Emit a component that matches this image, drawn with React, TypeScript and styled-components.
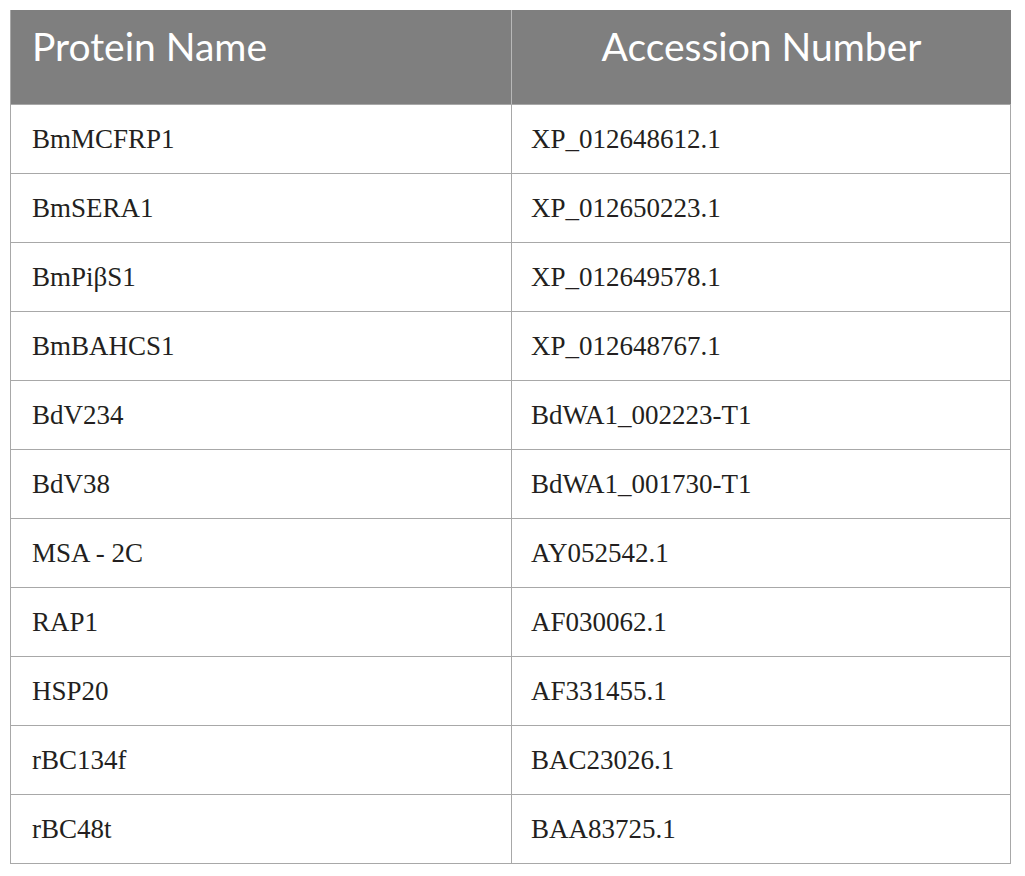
import React from "react";
import styled, { createGlobalStyle } from "styled-components";

const Global = createGlobalStyle`
  html, body { margin: 0; padding: 0; background: #ffffff; }
  body { padding: 10px 0 0 10px; }
`;

const Table = styled.div`
  width: 1001px;
  display: grid;
  grid-template-columns: 501px 500px;
  border-right: 1px solid #a8a8a8;
  border-bottom: 1px solid #a8a8a8;
  box-sizing: border-box;
`;

const HeadCell = styled.div<{ $first?: boolean }>`
  height: 94px;
  box-sizing: border-box;
  background: #7f7f7f;
  color: #ffffff;
  font-family: Lato, "Open Sans", sans-serif;
  font-size: 39px;
  line-height: 46px;
  padding: 13px 21px 0 21px;
  text-align: ${(p) => (p.$first ? "left" : "center")};
  border-left: 1px solid ${(p) => (p.$first ? "#a8a8a8" : "#b8b8b8")};
  white-space: nowrap;
`;

const Cell = styled.div<{ $first?: boolean }>`
  height: 69px;
  box-sizing: border-box;
  display: flex;
  align-items: center;
  padding: 0 0 0 ${(p) => (p.$first ? "21px" : "19px")};
  border-top: 1px solid #a8a8a8;
  border-left: 1px solid #a8a8a8;
  font-family: "Liberation Serif", "Times New Roman", serif;
  font-size: 27px;
  color: #231f20;
`;

const rows: [string, string][] = [
  ["BmMCFRP1", "XP_012648612.1"],
  ["BmSERA1", "XP_012650223.1"],
  ["BmPiβS1", "XP_012649578.1"],
  ["BmBAHCS1", "XP_012648767.1"],
  ["BdV234", "BdWA1_002223-T1"],
  ["BdV38", "BdWA1_001730-T1"],
  ["MSA - 2C", "AY052542.1"],
  ["RAP1", "AF030062.1"],
  ["HSP20", "AF331455.1"],
  ["rBC134f", "BAC23026.1"],
  ["rBC48t", "BAA83725.1"],
];

export default function App() {
  return (
    <>
      <Global />
      <Table>
        <HeadCell $first>Protein Name</HeadCell>
        <HeadCell>Accession Number</HeadCell>
        {rows.map(([a, b]) => (
          <React.Fragment key={a}>
            <Cell $first>{a}</Cell>
            <Cell>{b}</Cell>
          </React.Fragment>
        ))}
      </Table>
    </>
  );
}
